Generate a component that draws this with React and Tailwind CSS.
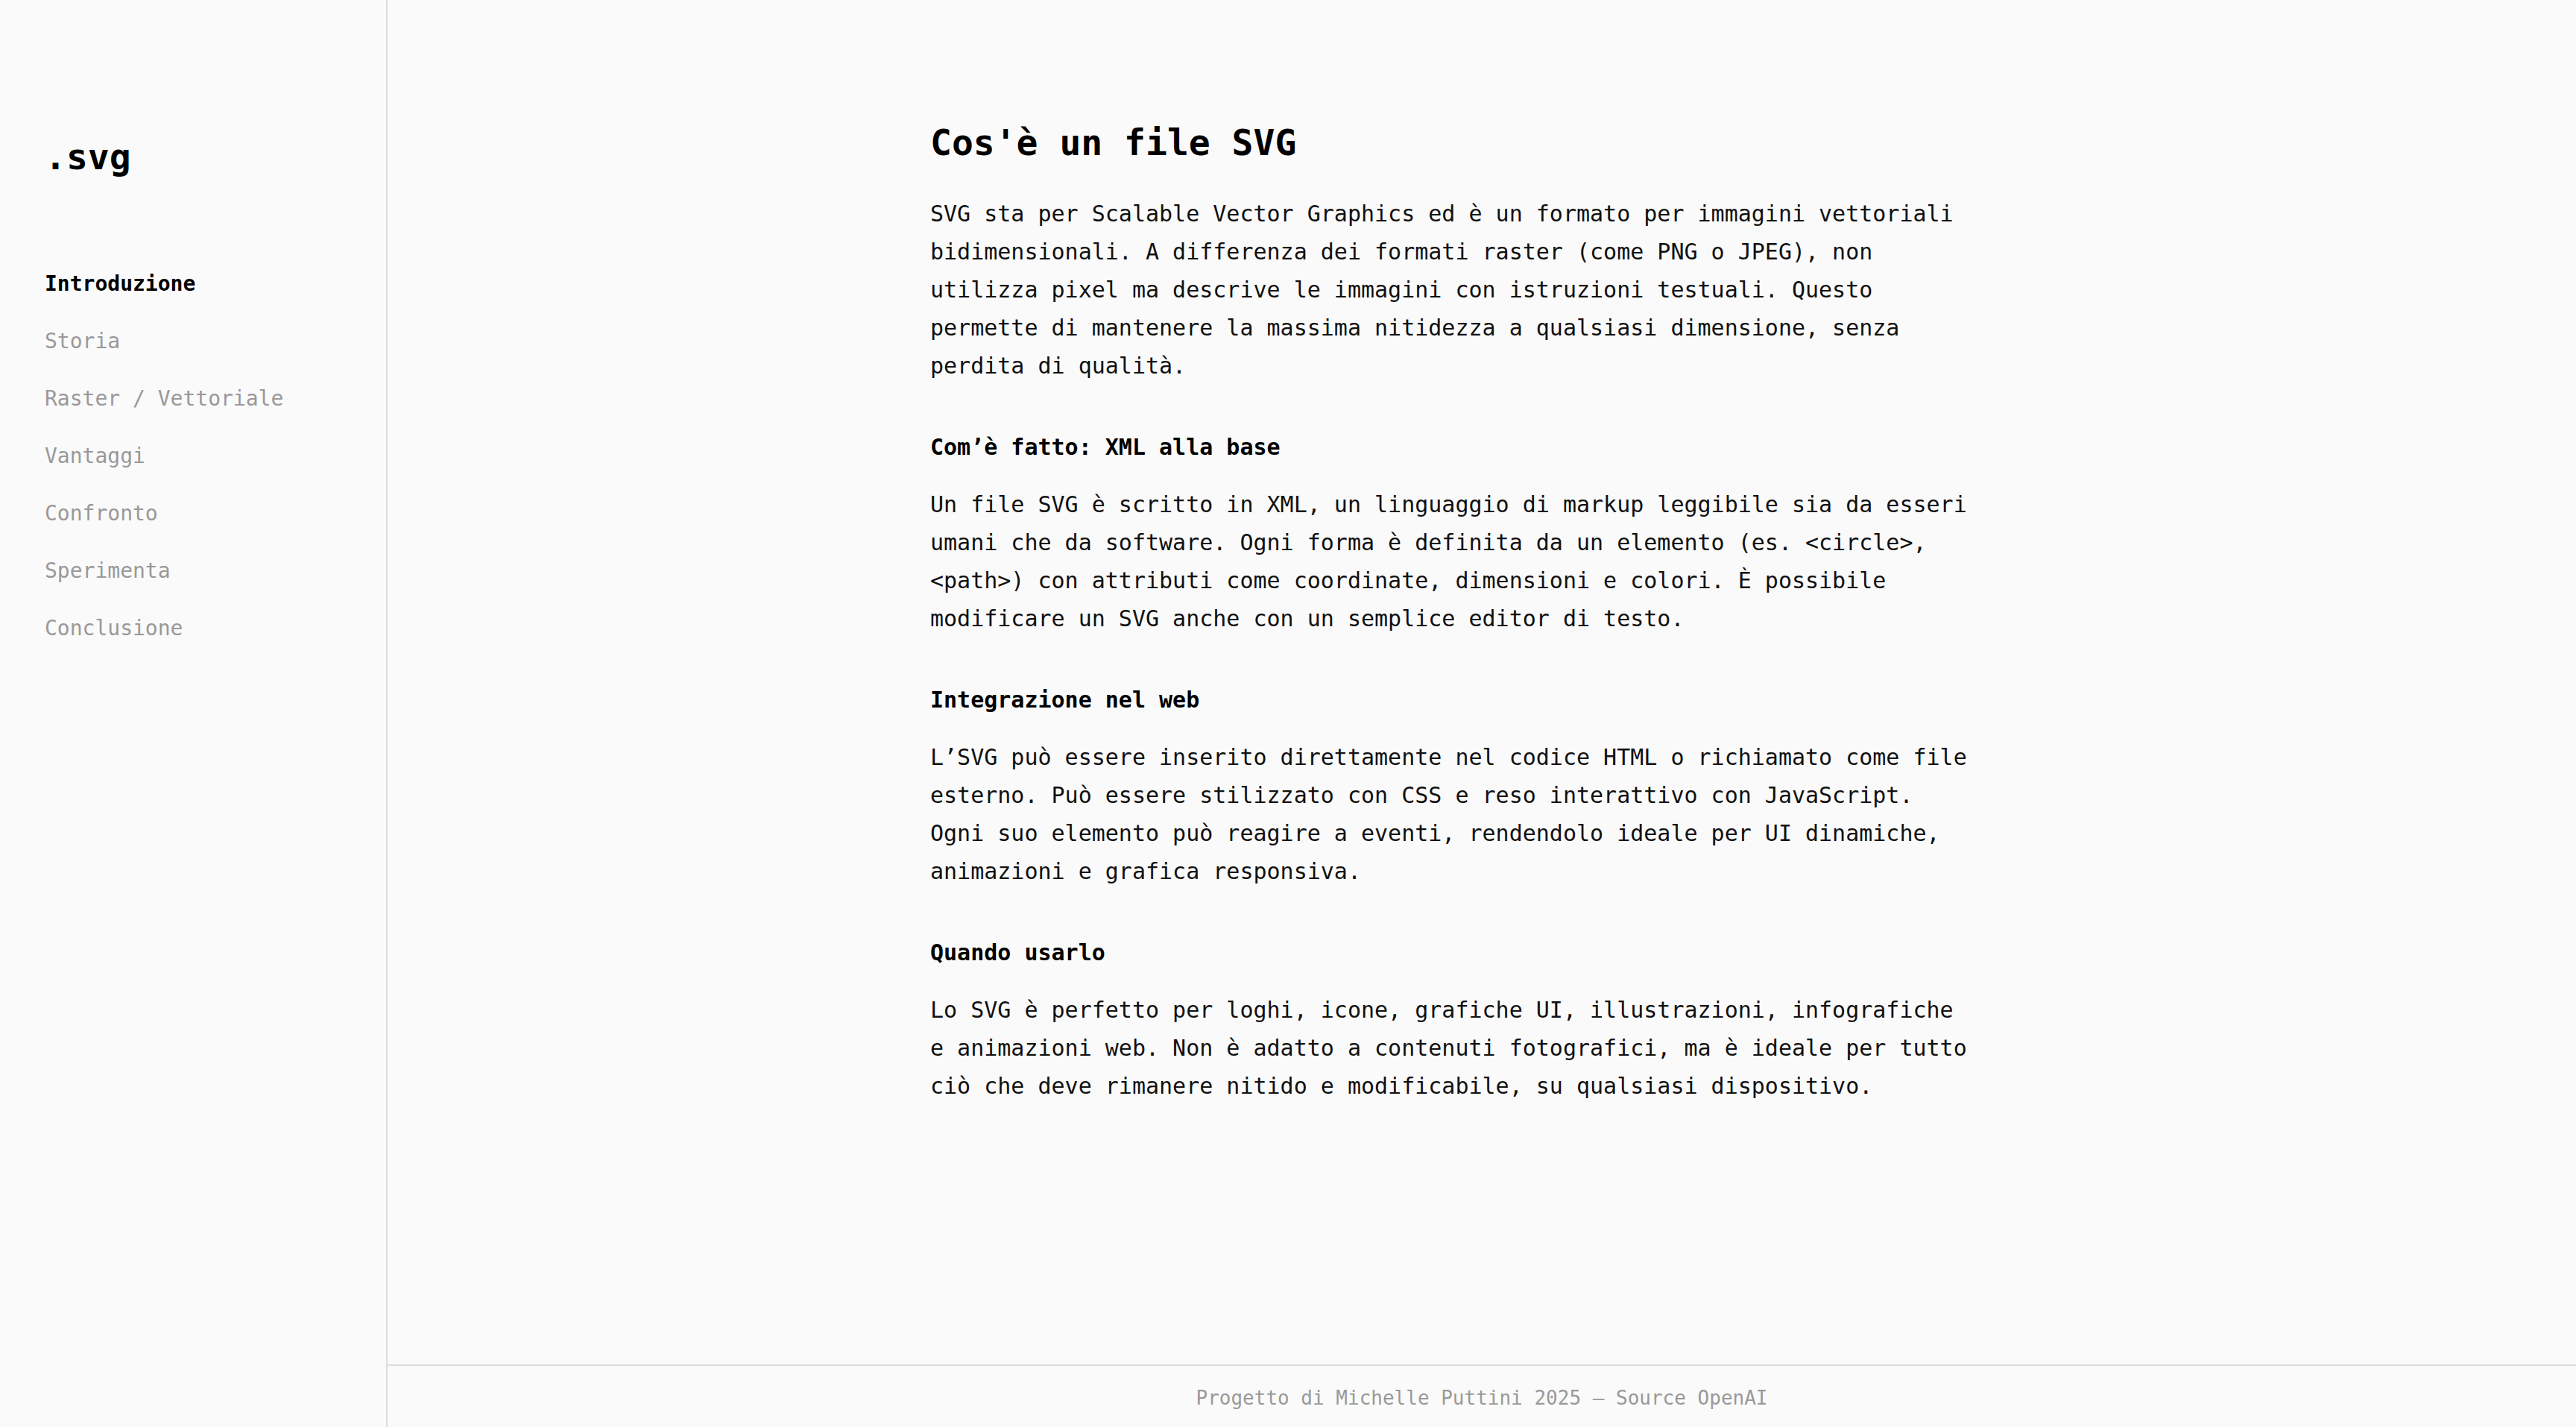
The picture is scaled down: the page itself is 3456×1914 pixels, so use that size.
import React from "react";

const FONT = { fontFamily: '"DejaVu Sans Mono", "Liberation Mono", monospace' };

const nav = [
  "Introduzione",
  "Storia",
  "Raster / Vettoriale",
  "Vantaggi",
  "Confronto",
  "Sperimenta",
  "Conclusione",
];

function Sub({ children }) {
  return (
    <h3 className="mt-[58px] mb-[26px] text-[30px] leading-[51px] font-bold text-black">
      {children}
    </h3>
  );
}

function P({ children }) {
  return <p className="text-[30px] leading-[51px] text-[#111]">{children}</p>;
}

export default function App() {
  return (
    <div className="flex h-[1914px] w-full bg-[#fafafa] text-black" style={FONT}>
      <aside className="flex w-[520px] shrink-0 flex-col border-r-2 border-[#dddddd] px-[60px] pt-[181px]">
        <div className="text-[48px] leading-[58px] font-bold text-black">.svg</div>
        <nav className="mt-[122px] flex flex-col gap-[37px]">
          {nav.map((item, i) => (
            <a
              key={item}
              className={
                i === 0
                  ? "text-[28px] leading-[40px] font-bold text-black"
                  : "text-[28px] leading-[40px] text-[#999999]"
              }
            >
              {item}
            </a>
          ))}
        </nav>
      </aside>

      <div className="flex min-w-0 flex-1 flex-col">
        <main className="flex flex-1 justify-center pr-[80px] pt-[162px]">
          <article className="w-[1400px]">
            <h1 className="mb-[41px] text-[48px] leading-[58px] font-bold text-black">
              Cos'è un file SVG
            </h1>
            <P>
              SVG sta per Scalable Vector Graphics ed è un formato per immagini vettoriali
              bidimensionali. A differenza dei formati raster (come PNG o JPEG), non
              utilizza pixel ma descrive le immagini con istruzioni testuali. Questo
              permette di mantenere la massima nitidezza a qualsiasi dimensione, senza
              perdita di qualità.
            </P>
            <Sub>Com’è fatto: XML alla base</Sub>
            <P>
              Un file SVG è scritto in XML, un linguaggio di markup leggibile sia da esseri
              umani che da software. Ogni forma è definita da un elemento (es. &lt;circle&gt;,
              &lt;path&gt;) con attributi come coordinate, dimensioni e colori. È possibile
              modificare un SVG anche con un semplice editor di testo.
            </P>
            <Sub>Integrazione nel web</Sub>
            <P>
              L’SVG può essere inserito direttamente nel codice HTML o richiamato come file
              esterno. Può essere stilizzato con CSS e reso interattivo con JavaScript.
              Ogni suo elemento può reagire a eventi, rendendolo ideale per UI dinamiche,
              animazioni e grafica responsiva.
            </P>
            <Sub>Quando usarlo</Sub>
            <P>
              Lo SVG è perfetto per loghi, icone, grafiche UI, illustrazioni, infografiche
              e animazioni web. Non è adatto a contenuti fotografici, ma è ideale per tutto
              ciò che deve rimanere nitido e modificabile, su qualsiasi dispositivo.
            </P>
          </article>
        </main>
        <footer className="flex h-[84px] shrink-0 items-center justify-center border-t-2 border-[#dddddd] pt-[4px] text-[26px] text-[#999999]">
          Progetto di Michelle Puttini 2025 — Source OpenAI
        </footer>
      </div>
    </div>
  );
}
